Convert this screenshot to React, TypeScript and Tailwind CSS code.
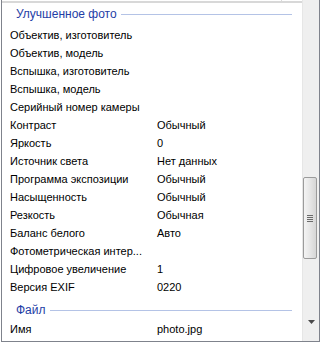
import React from 'react';

type Row = { label: string; value?: string };

const enhanced: Row[] = [
    { label: 'Объектив, изготовитель' },
    { label: 'Объектив, модель' },
    { label: 'Вспышка, изготовитель' },
    { label: 'Вспышка, модель' },
    { label: 'Серийный номер камеры' },
    { label: 'Контраст', value: 'Обычный' },
    { label: 'Яркость', value: '0' },
    { label: 'Источник света', value: 'Нет данных' },
    { label: 'Программа экспозиции', value: 'Обычный' },
    { label: 'Насыщенность', value: 'Обычный' },
    { label: 'Резкость', value: 'Обычная' },
    { label: 'Баланс белого', value: 'Авто' },
    { label: 'Фотометрическая интер...' },
    { label: 'Цифровое увеличение', value: '1' },
    { label: 'Версия EXIF', value: '0220' },
];

const fileRows: Row[] = [{ label: 'Имя', value: 'photo.jpg' }];

const GroupHeader: React.FC<{ title: string; className: string }> = ({ title, className }) => (
    <div className={`flex items-center pl-[14px] pr-[10px] ${className}`}>
        <span className="text-[#1f3ea6] text-[12px] leading-[13px]">{title}</span>
        <div className="flex-1 h-px bg-[#b4c3e6] ml-[4px]" />
    </div>
);

const PropRow: React.FC<{ row: Row }> = ({ row }) => (
    <div className="flex items-center h-[18px] text-black text-[11px]">
        <div className="w-[155px] pl-[8px] whitespace-nowrap overflow-hidden">{row.label}</div>
        <div className="flex-1 whitespace-nowrap">{row.value ?? ''}</div>
    </div>
);

const Scrollbar: React.FC = () => (
    <div className="w-[17px] flex flex-col bg-[#efefef] border-l border-[#e6e6e6]">
        <div className="h-[177px]" />
        <div className="h-[82px] mr-[2px] rounded-[2px] border border-[#9b9b9b] bg-gradient-to-r from-[#f4f4f4] via-[#e6e6e6] to-[#d6d6d6] flex flex-col items-center justify-center gap-[1px]">
            <div className="w-[6px] h-px bg-[#6a6a6a]" />
            <div className="w-[6px] h-px bg-[#6a6a6a]" />
            <div className="w-[6px] h-px bg-[#6a6a6a]" />
            <div className="w-[6px] h-px bg-[#6a6a6a]" />
        </div>
        <div className="flex-1" />
        <div className="h-[27px] flex items-start justify-center pt-[6px]">
            <svg width="7" height="4" viewBox="0 0 7 4">
                <path d="M0 0h7L3.5 4z" fill="#4a4a4a" />
            </svg>
        </div>
    </div>
);

const App: React.FC = () => {
    return (
        <div className="w-[322px] h-[344px] bg-white overflow-hidden" style={{ fontFamily: '"Liberation Sans", Arial, sans-serif' }}>
            <div className="ml-px w-[319px] h-[342px] flex border-l border-r border-b border-[#7f838c]">
                <div className="w-[300px] flex flex-col overflow-hidden">
                    <div className="h-px flex">
                        <div className="w-[279px]" />
                        <div className="w-px bg-[#dadada]" />
                    </div>
                    <div className="h-[2px] bg-[#d8d8d8]" />
                    <GroupHeader title="Улучшенное фото" className="h-[23px]" />
                    {enhanced.map((row) => (
                        <PropRow key={row.label} row={row} />
                    ))}
                    <GroupHeader title="Файл" className="h-[24px] pt-[4px]" />
                    {fileRows.map((row) => (
                        <PropRow key={row.label} row={row} />
                    ))}
                </div>
                <Scrollbar />
            </div>
        </div>
    );
};

export default App;
